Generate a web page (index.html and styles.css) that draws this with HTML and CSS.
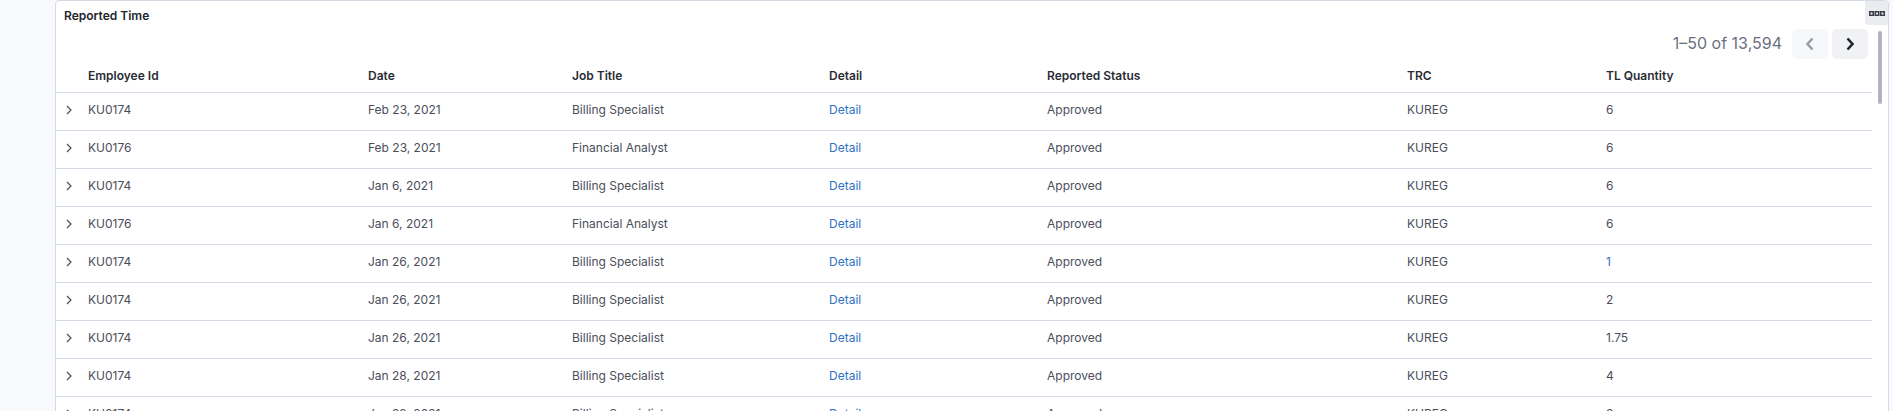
FILE: index.html
```html
<!DOCTYPE html>
<html lang="en">
<head>
<meta charset="utf-8">
<title>Reported Time</title>
<link rel="stylesheet" href="styles.css">
</head>
<body>
<div class="page">
  <section class="card">
    <button class="menu-btn" aria-label="More">
      <svg width="16" height="5" viewBox="0 0 16 5"><rect x="0.75" y="0.75" width="3.5" height="3.5" fill="none" stroke="#3a3d48" stroke-width="1.5"/><rect x="6.25" y="0.75" width="3.5" height="3.5" fill="none" stroke="#3a3d48" stroke-width="1.5"/><rect x="11.75" y="0.75" width="3.5" height="3.5" fill="none" stroke="#3a3d48" stroke-width="1.5"/></svg>
    </button>
    <h2 class="card-title">Reported Time</h2>
    <div class="scroll-area">
      <div class="content">
        <div class="pager">
          <span class="pager-text">1–50 of 13,594</span>
          <button class="pager-btn prev" aria-label="Previous">
            <svg width="10" height="14" viewBox="0 0 10 14"><path d="M7.5 1.5 L2.5 7 L7.5 12.5" fill="none" stroke="#9a9da6" stroke-width="2.6" stroke-linejoin="miter"/></svg>
          </button>
          <button class="pager-btn next" aria-label="Next">
            <svg width="10" height="14" viewBox="0 0 10 14"><path d="M2.5 1.5 L7.5 7 L2.5 12.5" fill="none" stroke="#1f2330" stroke-width="2.6" stroke-linejoin="miter"/></svg>
          </button>
        </div>
        <div class="table">
          <div class="row head">
            <div class="cell"></div>
            <div class="cell">Employee Id</div>
            <div class="cell">Date</div>
            <div class="cell">Job Title</div>
            <div class="cell">Detail</div>
            <div class="cell">Reported Status</div>
            <div class="cell">TRC</div>
            <div class="cell">TL Quantity</div>
          </div>
          <div class="row"><div class="cell exp"><svg width="6" height="10" viewBox="0 0 6 10"><path d="M1 1 L5 5 L1 9" fill="none" stroke="#4a4e5a" stroke-width="1.2"/></svg></div><div class="cell">KU0174</div><div class="cell">Feb 23, 2021</div><div class="cell">Billing Specialist</div><div class="cell"><a class="link">Detail</a></div><div class="cell">Approved</div><div class="cell">KUREG</div><div class="cell">6</div></div>
          <div class="row"><div class="cell exp"><svg width="6" height="10" viewBox="0 0 6 10"><path d="M1 1 L5 5 L1 9" fill="none" stroke="#4a4e5a" stroke-width="1.2"/></svg></div><div class="cell">KU0176</div><div class="cell">Feb 23, 2021</div><div class="cell">Financial Analyst</div><div class="cell"><a class="link">Detail</a></div><div class="cell">Approved</div><div class="cell">KUREG</div><div class="cell">6</div></div>
          <div class="row"><div class="cell exp"><svg width="6" height="10" viewBox="0 0 6 10"><path d="M1 1 L5 5 L1 9" fill="none" stroke="#4a4e5a" stroke-width="1.2"/></svg></div><div class="cell">KU0174</div><div class="cell">Jan 6, 2021</div><div class="cell">Billing Specialist</div><div class="cell"><a class="link">Detail</a></div><div class="cell">Approved</div><div class="cell">KUREG</div><div class="cell">6</div></div>
          <div class="row"><div class="cell exp"><svg width="6" height="10" viewBox="0 0 6 10"><path d="M1 1 L5 5 L1 9" fill="none" stroke="#4a4e5a" stroke-width="1.2"/></svg></div><div class="cell">KU0176</div><div class="cell">Jan 6, 2021</div><div class="cell">Financial Analyst</div><div class="cell"><a class="link">Detail</a></div><div class="cell">Approved</div><div class="cell">KUREG</div><div class="cell">6</div></div>
          <div class="row"><div class="cell exp"><svg width="6" height="10" viewBox="0 0 6 10"><path d="M1 1 L5 5 L1 9" fill="none" stroke="#4a4e5a" stroke-width="1.2"/></svg></div><div class="cell">KU0174</div><div class="cell">Jan 26, 2021</div><div class="cell">Billing Specialist</div><div class="cell"><a class="link">Detail</a></div><div class="cell">Approved</div><div class="cell">KUREG</div><div class="cell"><a class="link">1</a></div></div>
          <div class="row"><div class="cell exp"><svg width="6" height="10" viewBox="0 0 6 10"><path d="M1 1 L5 5 L1 9" fill="none" stroke="#4a4e5a" stroke-width="1.2"/></svg></div><div class="cell">KU0174</div><div class="cell">Jan 26, 2021</div><div class="cell">Billing Specialist</div><div class="cell"><a class="link">Detail</a></div><div class="cell">Approved</div><div class="cell">KUREG</div><div class="cell">2</div></div>
          <div class="row"><div class="cell exp"><svg width="6" height="10" viewBox="0 0 6 10"><path d="M1 1 L5 5 L1 9" fill="none" stroke="#4a4e5a" stroke-width="1.2"/></svg></div><div class="cell">KU0174</div><div class="cell">Jan 26, 2021</div><div class="cell">Billing Specialist</div><div class="cell"><a class="link">Detail</a></div><div class="cell">Approved</div><div class="cell">KUREG</div><div class="cell">1.75</div></div>
          <div class="row"><div class="cell exp"><svg width="6" height="10" viewBox="0 0 6 10"><path d="M1 1 L5 5 L1 9" fill="none" stroke="#4a4e5a" stroke-width="1.2"/></svg></div><div class="cell">KU0174</div><div class="cell">Jan 28, 2021</div><div class="cell">Billing Specialist</div><div class="cell"><a class="link">Detail</a></div><div class="cell">Approved</div><div class="cell">KUREG</div><div class="cell">4</div></div>
          <div class="row"><div class="cell exp"><svg width="6" height="10" viewBox="0 0 6 10"><path d="M1 1 L5 5 L1 9" fill="none" stroke="#4a4e5a" stroke-width="1.2"/></svg></div><div class="cell">KU0174</div><div class="cell">Jan 29, 2021</div><div class="cell">Billing Specialist</div><div class="cell"><a class="link">Detail</a></div><div class="cell">Approved</div><div class="cell">KUREG</div><div class="cell">3</div></div>
        </div>
      </div>
      <div class="scrollbar"><div class="thumb"></div></div>
    </div>
  </section>
</div>
</body>
</html>
```

FILE: styles.css
```css
html, body {
  margin: 0;
  height: 411px;
  overflow: hidden;
}
body {
  background: #f8f9fd;
  font-family: Inter, "Noto Sans", "Liberation Sans", sans-serif;
  color: #4a4e5a;
}
.page {
  padding-left: 55px;
}
.card {
  position: relative;
  width: 1834px;
  box-sizing: border-box;
  background: #fff;
  border: 1px solid #d6dae5;
  border-radius: 4px 4px 0 0;
  height: 430px;
  overflow: hidden;
}
.menu-btn {
  position: absolute;
  top: 0;
  right: 0;
  width: 23px;
  height: 24px;
  padding: 0;
  border: 0;
  background: #ebecef;
  border-radius: 0 0 0 4px;
  display: flex;
  align-items: center;
  justify-content: center;
}
.card-title {
  margin: 0;
  height: 27px;
  box-sizing: border-box;
  padding: 8px 8px 0;
  font-size: 12px;
  line-height: 14px;
  font-weight: 600;
  color: #23252e;
}
.scroll-area {
  display: flex;
}
.content {
  width: 1816px;
}
.pager {
  display: flex;
  justify-content: flex-end;
  align-items: center;
  gap: 4px;
  padding: 1px 4px 0 0;
  height: 31px;
  box-sizing: border-box;
}
.pager-text {
  font-size: 16px;
  color: #6b7080;
  margin-right: 6px;
  margin-top: -2px;
}
.pager-btn {
  width: 36px;
  height: 30px;
  border: 0;
  border-radius: 5px;
  padding: 0;
  display: flex;
  align-items: center;
  justify-content: center;
}
.pager-btn.prev { background: #f7f8fb; }
.pager-btn.next { background: #f1f2f6; }
.table {
  display: flex;
  flex-direction: column;
}
.row {
  display: grid;
  grid-template-columns: 32px 280px 204px 257px 218px 360px 199px 266px;
  height: 38px;
  box-sizing: border-box;
  border-bottom: 1px solid #d6dae6;
  align-items: center;
  padding-bottom: 3px;
  font-size: 12px;
  line-height: 14px;
}
.row.head {
  height: 34px;
  padding-bottom: 0;
  font-weight: 600;
  color: #2a2c35;
}
.cell {
  white-space: nowrap;
}
.exp {
  display: flex;
  padding-left: 10px;
}
.link {
  color: #2f72c4;
  cursor: pointer;
}
.scrollbar {
  width: 16px;
  padding: 3px 0 0 6px;
  box-sizing: border-box;
}
.thumb {
  width: 4px;
  height: 73px;
  background: #b3b4bb;
  border-radius: 2px;
}
```
